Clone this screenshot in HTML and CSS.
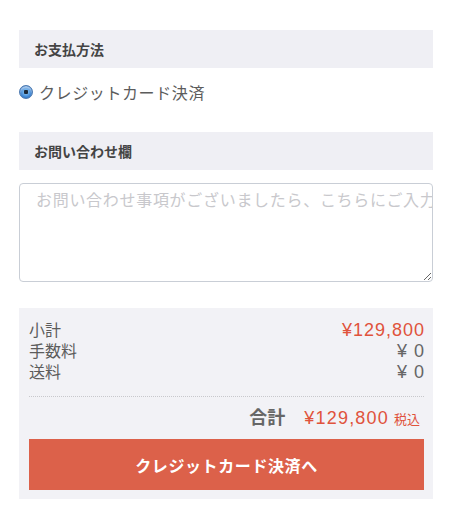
FILE: index.html
```html
<!doctype html>
<html lang="ja">
  <head>
    <meta charset="UTF-8" />
    <meta name="viewport" content="width=device-width, initial-scale=1.0" />
    <title>お支払い</title>
    <link rel="stylesheet" href="styles.css">
  </head>
  <body>
    <section class="block">
      <h2 class="block-title">お支払方法</h2>
      <label class="pay-option">
        <span class="radio"></span>
        クレジットカード決済
      </label>
    </section>

    <section class="block">
      <h2 class="block-title">お問い合わせ欄</h2>
      <textarea class="inquiry" wrap="off" placeholder="お問い合わせ事項がございましたら、こちらにご入力ください"></textarea>
    </section>

    <section class="summary">
      <dl class="summary-rows">
        <div class="row"><dt>小計</dt><dd class="price">¥129,800</dd></div>
        <div class="row"><dt>手数料</dt><dd>¥ 0</dd></div>
        <div class="row"><dt>送料</dt><dd>¥ 0</dd></div>
      </dl>
      <div class="total">
        <span class="total-label">合計</span>
        <span class="total-price">¥129,800</span>
        <span class="tax">税込</span>
      </div>
      <button class="checkout">クレジットカード決済へ</button>
    </section>
  </body>
</html>
```

FILE: styles.css
```css
* {
  box-sizing: border-box;
  margin: 0;
  padding: 0;
}

body {
  padding: 30px 19px 0;
  background: #fff;
  font-family: "Liberation Sans", "Noto Sans CJK JP", sans-serif;
  color: #555;
}

.block-title {
  height: 38px;
  display: flex;
  align-items: center;
  padding-left: 15px;
  background: #efeff4;
  font-size: 14px;
  font-weight: bold;
  color: #444;
}

.pay-option {
  display: flex;
  align-items: center;
  gap: 6px;
  height: 24px;
  margin: 12px 0 28px;
  font-size: 16px;
  letter-spacing: 0.6px;
  color: #5c5c5c;
}

.radio {
  width: 14px;
  height: 14px;
  border-radius: 50%;
  border: 1px solid #4a78b0;
  background: radial-gradient(circle at 50% 50%, #1c2a3a 0 2px, #6fb0ea 2.5px, #3f86d4 5px, #2f6fb8 7px);
  box-shadow: inset 0 2px 2px rgba(255, 255, 255, 0.6);
}

.inquiry {
  display: block;
  width: 100%;
  height: 99px;
  margin-top: 13px;
  padding: 5px 16px;
  border: 1px solid #c9ced6;
  border-radius: 4px;
  font-family: "Noto Sans CJK JP", sans-serif;
  font-size: 16px;
  line-height: 20px;
  letter-spacing: 0.7px;
  color: #555;
  overflow: hidden;
  white-space: pre;
}

.inquiry::placeholder {
  color: #c8c8cc;
}

.summary {
  margin-top: 26px;
  padding: 12px 9px 9px 10px;
  background: #f2f2f6;
}

.row {
  display: flex;
  justify-content: space-between;
  height: 21px;
  line-height: 21px;
  font-size: 16px;
  color: #5c5c5c;
}

.row dd {
  font-size: 18px;
  letter-spacing: 1px;
  margin-right: -1px;
  color: #666;
}

.row .price {
  color: #e0533c;
}

.summary-rows {
  padding-bottom: 13px;
  border-bottom: 1px dotted #c8c8cc;
}

.total {
  display: flex;
  justify-content: flex-end;
  align-items: baseline;
  height: 34px;
  padding: 6px 4px 0 0;
  color: #e0533c;
}

.total-label {
  font-size: 18px;
  font-weight: bold;
  color: #666;
  margin-right: 19px;
}

.total-price {
  font-size: 18px;
  letter-spacing: 1.2px;
  margin-right: 5px;
}

.tax {
  font-size: 13px;
}

.checkout {
  display: block;
  width: 100%;
  height: 51px;
  margin-top: 8px;
  border: none;
  background: #dc614a;
  color: #fff;
  font-family: "Noto Sans CJK JP", sans-serif;
  font-size: 16px;
  font-weight: bold;
  letter-spacing: 0.6px;
}
```
